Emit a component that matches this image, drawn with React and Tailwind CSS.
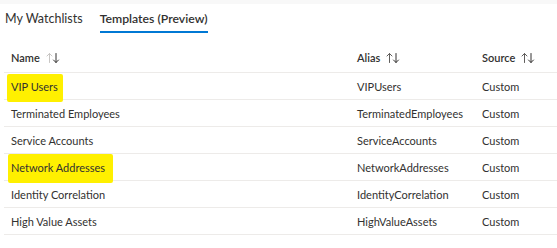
import React from "react";

const rows = [
  { name: "VIP Users", alias: "VIPUsers", hl: "vip" },
  { name: "Terminated Employees", alias: "TerminatedEmployees" },
  { name: "Service Accounts", alias: "ServiceAccounts" },
  { name: "Network Addresses", alias: "NetworkAddresses", hl: "net" },
  { name: "Identity Correlation", alias: "IdentityCorrelation" },
  { name: "High Value Assets", alias: "HighValueAssets" },
];

function SortIcon({ upLight }) {
  return (
    <svg width="14" height="12" viewBox="0 0 14 12" className="ml-[6px]">
      <g fill="none" strokeWidth="1" strokeLinecap="round" strokeLinejoin="round">
        <g stroke={upLight ? "#c8c6c4" : "#605e5c"}>
          <path d="M3.5 10.5V1.5" />
          <path d="M1 4l2.5-2.5L6 4" />
        </g>
        <g stroke="#323130">
          <path d="M10 1.5v9" />
          <path d="M7.5 8l2.5 2.5L12.5 8" />
        </g>
      </g>
    </svg>
  );
}

export default function App() {
  return (
    <div
      className="w-[557px] h-[248px] bg-white overflow-hidden text-[#323130]"
      style={{ fontFamily: 'Lato, "Noto Sans", sans-serif' }}
    >
      <div className="h-[4px] bg-[#f8f8f8]" />
      <div className="flex items-start h-[40px] pl-[5px]">
        <div className="pt-[7px] leading-[16px] text-[12.5px] text-[#323130]">My Watchlists</div>
        <div className="ml-[17px] flex flex-col">
          <div className="pt-[7px] leading-[16px] text-[12.25px] font-semibold">Templates (Preview)</div>
          <div className="mt-[4px] h-[2px] bg-[#0078d4]" />
        </div>
      </div>
      <div className="flex items-center h-[29px] border-b border-[#edebe9] ml-[4px] text-[11px] font-semibold">
        <div className="w-[353px] pl-[7px] flex items-center">
          Name <SortIcon upLight />
        </div>
        <div className="w-[125px] flex items-center">
          Alias <SortIcon />
        </div>
        <div className="flex items-center">
          Source <SortIcon />
        </div>
      </div>
      {rows.map((r) => (
        <div
          key={r.name}
          className="relative flex items-center h-[27px] border-b border-[#edebe9] ml-[4px] text-[11px] pt-[2px]"
        >
          {r.hl === "vip" && (
            <span className="absolute left-[3px] top-[1px] w-[56px] h-[28px] bg-[#fff000] rounded-[2px]" />
          )}
          {r.hl === "net" && (
            <span className="absolute left-[4px] top-[0px] w-[105px] h-[29px] bg-[#fff000] rounded-[2px]" />
          )}
          <div className="relative w-[353px] pl-[7px]">{r.name}</div>
          <div className="w-[125px]">{r.alias}</div>
          <div>Custom</div>
        </div>
      ))}
    </div>
  );
}
